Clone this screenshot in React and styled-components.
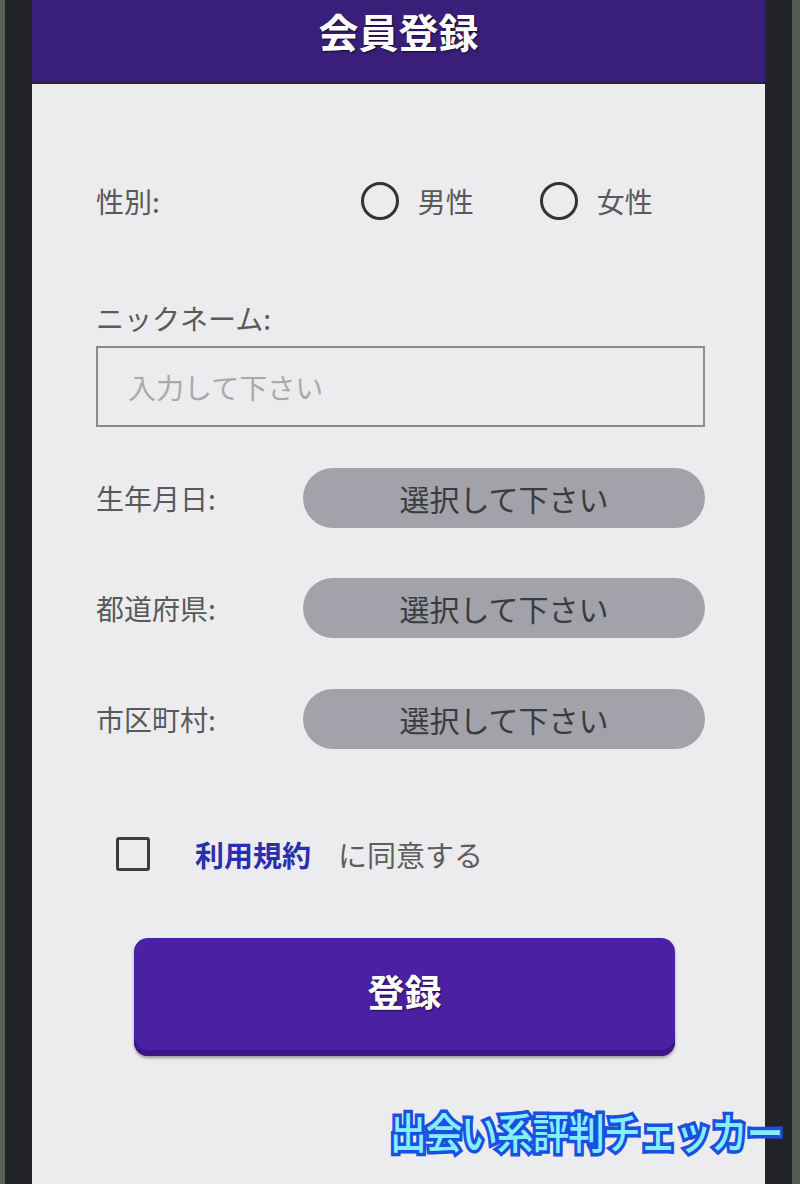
import styled, { createGlobalStyle } from "styled-components"

const GlobalStyle = createGlobalStyle`
  html, body {
    margin: 0;
    padding: 0;
    background: #23252b;
  }
  body {
    font-family: "Noto Sans CJK JP", "Noto Sans", sans-serif;
  }
`

const Phone = styled.div`
  position: relative;
  width: 800px;
  height: 1184px;
  box-sizing: border-box;
  display: flex;
  background: #22242a;
  border-left: 5px solid #5b6159;
  border-right: 8px solid #555a55;
  padding: 0 27px 0 27px;
  overflow: hidden;
`

const Screen = styled.div`
  flex: 1;
  display: flex;
  flex-direction: column;
  background: #ececef;
`

const Header = styled.header`
  height: 84px;
  box-sizing: border-box;
  background: #3a1f7a;
  border-bottom: 2px solid #2a2440;
  display: flex;
  justify-content: center;
  padding-top: 4px;
`

const Title = styled.h1`
  margin: 0;
  color: #fff;
  font-size: 40px;
  line-height: 54px;
  font-weight: 700;
  text-shadow: 1px 1px 2px rgba(0, 0, 0, 0.7);
`

const Form = styled.form`
  display: flex;
  flex-direction: column;
  padding: 97px 60px 0 64px;
`

const Label = styled.span`
  color: #595959;
  font-size: 28px;
  line-height: 40px;
  white-space: nowrap;
`

const GenderRow = styled.div`
  display: flex;
  align-items: center;
  height: 40px;
`

const RadioGroup = styled.div`
  display: flex;
  align-items: center;
  gap: 66px;
  margin-left: 201px;
`

const RadioOption = styled.label`
  display: flex;
  align-items: center;
  gap: 19px;
  color: #595959;
  font-size: 28px;
`

const RadioCircle = styled.span`
  width: 38px;
  height: 38px;
  box-sizing: border-box;
  border: 3px solid #333;
  border-radius: 50%;
`

const NickLabel = styled(Label)`
  margin-top: 77px;
`

const TextInput = styled.div`
  margin-top: 8px;
  height: 81px;
  box-sizing: border-box;
  border: 2px solid #8c8c8c;
  display: flex;
  align-items: center;
  padding-left: 30px;
  color: #a9a9a9;
  font-size: 28px;
`

const SelectRow = styled.div`
  display: flex;
  align-items: center;
  justify-content: space-between;
  height: 60px;
  margin-top: ${(props) => props.gap}px;
`

const Pill = styled.div`
  width: 402px;
  height: 60px;
  border-radius: 30px;
  background: #a2a2aa;
  display: flex;
  align-items: center;
  justify-content: center;
  color: #3b3b3b;
  font-size: 30px;
`

const AgreeRow = styled.div`
  display: flex;
  align-items: center;
  margin-top: 88px;
  margin-left: 20px;
  height: 34px;
  font-size: 29px;
`

const CheckBox = styled.span`
  width: 34px;
  height: 34px;
  box-sizing: border-box;
  border: 3px solid #3c3c3c;
  border-radius: 3px;
  margin-right: 45px;
`

const TermsLink = styled.a`
  color: #2b2fae;
  font-weight: 700;
  margin-right: 27px;
  text-decoration: none;
`

const AgreeText = styled.span`
  color: #5d5d5d;
`

const SubmitButton = styled.button`
  margin: 67px 0 0 38px;
  width: 541px;
  height: 118px;
  padding-bottom: 14px;
  border: none;
  border-radius: 14px;
  background: #4b21a3;
  box-shadow: inset 0 -6px 0 #3a1785, 0 2px 3px rgba(0, 0, 0, 0.35);
  color: #fff;
  font-family: "Noto Sans CJK JP", sans-serif;
  font-size: 37px;
  font-weight: 700;
  text-shadow: 1px 1px 2px rgba(0, 0, 0, 0.6);
`

const Watermark = styled.div`
  position: absolute;
  left: 385px;
  top: 1101px;
  font-size: 42px;
  line-height: 60px;
  font-weight: 500;
  color: #84f0ff;
  -webkit-text-stroke: 7px #1a4fe0;
  paint-order: stroke fill;
  letter-spacing: -1px;
  white-space: nowrap;
  transform: scaleX(0.87);
  transform-origin: left center;
`

const selects = [
  { label: "生年月日:", gap: 41 },
  { label: "都道府県:", gap: 50 },
  { label: "市区町村:", gap: 51 },
]

export default function App() {
  return (
    <>
      <GlobalStyle />
      <Phone>
        <Screen>
          <Header>
            <Title>会員登録</Title>
          </Header>
          <Form onSubmit={(e) => e.preventDefault()}>
            <GenderRow>
              <Label>性別:</Label>
              <RadioGroup>
                <RadioOption>
                  <RadioCircle />
                  男性
                </RadioOption>
                <RadioOption>
                  <RadioCircle />
                  女性
                </RadioOption>
              </RadioGroup>
            </GenderRow>
            <NickLabel>ニックネーム:</NickLabel>
            <TextInput>入力して下さい</TextInput>
            {selects.map((s) => (
              <SelectRow key={s.label} gap={s.gap}>
                <Label>{s.label}</Label>
                <Pill>選択して下さい</Pill>
              </SelectRow>
            ))}
            <AgreeRow>
              <CheckBox />
              <TermsLink href="#">利用規約</TermsLink>
              <AgreeText>に同意する</AgreeText>
            </AgreeRow>
            <SubmitButton type="submit">登録</SubmitButton>
          </Form>
        </Screen>
        <Watermark>出会い系評判チェッカー</Watermark>
      </Phone>
    </>
  )
}
